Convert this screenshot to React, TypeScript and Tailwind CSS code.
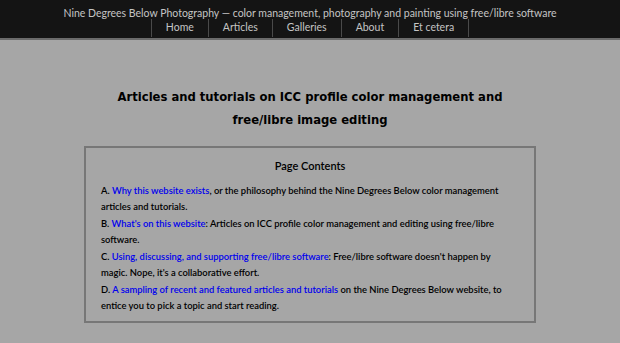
export default function App() {
  const nav = ['Home', 'Articles', 'Galleries', 'About', 'Et cetera'];
  return (
    <div className="min-h-[343px] bg-[#a6a6a6] font-['Lato',sans-serif] text-black">
      <header className="bg-[#141414] border-b-2 border-[#6b6b6b] h-[40px] flex flex-col items-center">
        <div className="text-[10.5px] leading-[14px] pt-[6px] text-[#c4c4c4]">
          Nine Degrees Below Photography — color management, photography and painting using free/libre software
        </div>
        <nav className="flex border-l border-[#4a4a4a] mt-[-1px]">
          {nav.map((n) => (
            <a key={n} className="px-[14px] border-r border-[#4a4a4a] h-[18px] text-[10.5px] leading-[17px] text-[#c4c4c4]">
              {n}
            </a>
          ))}
        </nav>
      </header>

      <h1 className="text-center font-bold text-[11.6px] leading-[23px] mt-[46px] mx-auto w-[420px] font-['DejaVu_Sans',sans-serif]">
        Articles and tutorials on ICC profile color management and free/libre image editing
      </h1>

      <div className="mx-auto mt-[14px] w-[452px] border-2 border-[#777] pt-[10px] pb-[6px] px-[15px] text-[9.4px] leading-[16.5px] font-semibold">
        <h2 className="text-center text-[11px] mb-[8px]">Page Contents</h2>
        <p>
          A. <a className="text-[#0000ee]">Why this website exists</a>, or the philosophy behind the Nine Degrees Below color management articles and tutorials.
        </p>
        <p>
          B. <a className="text-[#0000ee]">What's on this website</a>: Articles on ICC profile color management and editing using free/libre software.
        </p>
        <p>
          C. <a className="text-[#0000ee]">Using, discussing, and supporting free/libre software</a>: Free/libre software doesn't happen by magic. Nope, it's a collaborative effort.
        </p>
        <p>
          D. <a className="text-[#0000ee]">A sampling of recent and featured articles and tutorials</a> on the Nine Degrees Below website, to entice you to pick a topic and start reading.
        </p>
      </div>
    </div>
  );
}
